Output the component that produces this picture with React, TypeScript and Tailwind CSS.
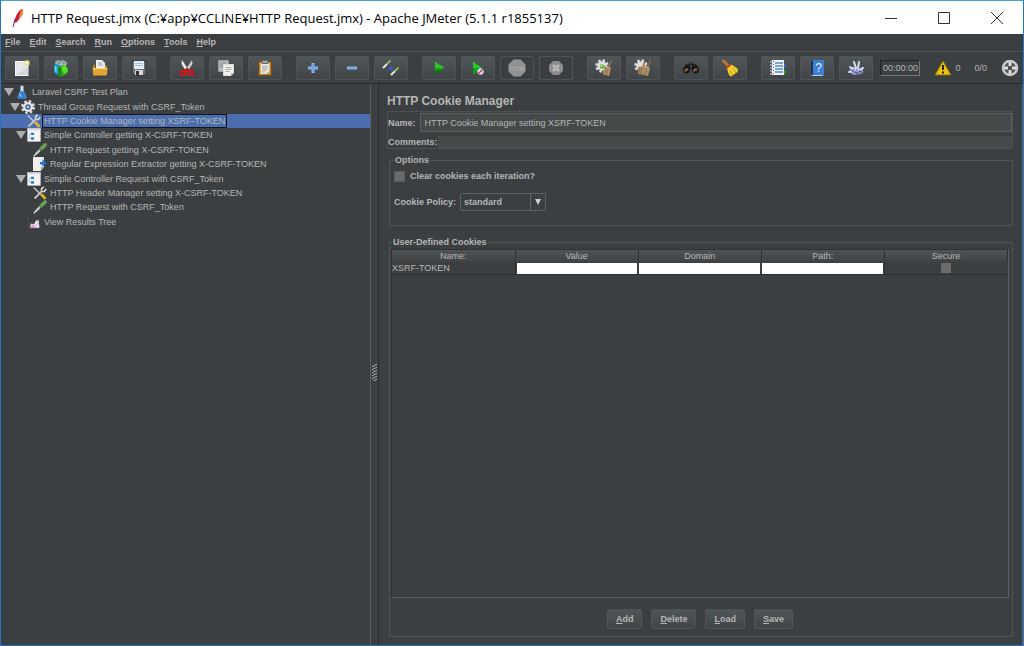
import React, { useState } from 'react';

type IconFC = React.FC;

const Svg: React.FC<{ size?: string; children: React.ReactNode }> = ({ size = 'size-[18px]', children }) => (
  <svg viewBox="0 0 18 18" className={`${size} shrink-0`} aria-hidden="true">
    {children}
  </svg>
);

/* ---------- toolbar icons ---------- */

const NewIcon: IconFC = () => (
  <Svg>
    <rect x="2.5" y="2.5" width="12.5" height="14" fill="#e6e6e6" stroke="#f4f4f4" />
    <path d="M3 16h12V8z" fill="#d8d8d8" />
    <circle cx="14" cy="4" r="3" fill="#e8e27a" opacity=".7" />
    <circle cx="14" cy="4" r="1.2" fill="#fffbc0" />
  </Svg>
);

const TemplatesIcon: IconFC = () => (
  <Svg>
    <path d="M3 3l3-2 2 1 2-1 5 2-1 4H4z" fill="#a9b7bd" />
    <path d="M5 2l2 3 2-3M10 2l2 3 2-2" stroke="#6c8791" fill="none" />
    <path d="M2 6l3-1 3 1v10l-4-1-2-2z" fill="#1c9ccc" />
    <path d="M3 7l1.5 1v6L3 12z" fill="#7cd8f2" />
    <path d="M6 8l6-2 4 3v4l-3 3-6 2z" fill="#2aa51a" />
    <path d="M9 8l4-1.500 2.500 3V13L12 15z" fill="#5be02b" />
    <path d="M6 8l3 1v8l-2 1z" fill="#14820f" />
  </Svg>
);

const OpenIcon: IconFC = () => (
  <Svg>
    <path d="M5 1h6l3 3v6H5z" fill="#eeeeee" />
    <path d="M7 4h4M7 6h5" stroke="#9a9a9a" />
    <path d="M2 7l2-2v5h10V6l2 1v8l-1 1H3l-1-1z" fill="#c78a1c" />
    <path d="M1.500 10l3-1h12l-.5 6-1 1.500H2.500z" fill="#e3a532" />
    <path d="M2 10l3-.5h11" stroke="#f9d57c" fill="none" />
  </Svg>
);

const SaveIcon: IconFC = () => (
  <Svg>
    <path d="M2 2h14v14H4l-2-2z" fill="#6a6e71" stroke="#303437" />
    <rect x="4" y="2" width="10" height="8" fill="#e6eef5" />
    <path d="M5 4.500h8M5 6.500h8" stroke="#9dbdd8" />
    <rect x="5" y="11" width="8" height="5" fill="#d5d5d5" />
    <rect x="6" y="12" width="3" height="4" fill="#333638" />
  </Svg>
);

const CutIcon: IconFC = () => (
  <Svg>
    <path d="M4 1l6 9-2 2-4.500-7z" fill="#f0f0f0" />
    <path d="M14 1L8 10l2 2 4.500-7z" fill="#c9c9c9" />
    <ellipse cx="5" cy="14" rx="2.500" ry="2" fill="none" stroke="#d3141a" strokeWidth="2" />
    <ellipse cx="13" cy="14" rx="2.500" ry="2" fill="none" stroke="#d3141a" strokeWidth="2" />
    <path d="M6.500 12.500L9 10l2.500 2.500" stroke="#d3141a" strokeWidth="2.500" fill="none" />
  </Svg>
);

const CopyIcon: IconFC = () => (
  <Svg>
    <path d="M1.500 1.500h10v11h-10z" fill="#b9bbbb" stroke="#979999" />
    <path d="M3 4h6M3 6h4M3 8h3" stroke="#8b8d8d" />
    <path d="M6.500 5.500h10V14L14 16.500H6.500z" fill="#f1f1ee" stroke="#deded8" />
    <path d="M8.500 8.500h6M8.500 10.500h6M8.500 12.500h4" stroke="#a9a9a4" />
    <path d="M16.500 14H14v2.500z" fill="#bababa" />
  </Svg>
);

const PasteIcon: IconFC = () => (
  <Svg>
    <rect x="2.500" y="2.500" width="13" height="14" rx="1" fill="#b87820" stroke="#754b10" />
    <path d="M4.500 4h9v11h-9z" fill="#efeee9" />
    <path d="M6 1.500h6v3H6z" fill="#a6a6a6" stroke="#666" />
    <path d="M6 7h6M6 9h6M6 11h5M6 13h3" stroke="#a09f99" />
    <path d="M13.500 11.500L10 15h3.500z" fill="#a9a99f" />
  </Svg>
);

const PlusIcon: IconFC = () => (
  <Svg>
    <path d="M9 4v10M4 9h10" stroke="#8db9ee" strokeWidth="3" />
    <path d="M9 5v8M5 9h8" stroke="#5e98df" />
  </Svg>
);

const MinusIcon: IconFC = () => (
  <Svg>
    <path d="M4 9h10" stroke="#8db9ee" strokeWidth="3" />
    <path d="M5 9h8" stroke="#5e98df" />
  </Svg>
);

const ToggleIcon: IconFC = () => (
  <Svg>
    <path d="M1 9l4-4" stroke="#e9e9e9" strokeWidth="2" />
    <path d="M5 5l3.500-3.500" stroke="#86b65d" strokeWidth="2" />
    <path d="M9 16l4-4" stroke="#e9e9e9" strokeWidth="2" />
    <path d="M12.500 12.500L16.500 8.500" stroke="#86b65d" strokeWidth="2" />
    <path d="M5 6l3 3" stroke="#2c55b4" strokeDasharray="1 1" />
    <path d="M10.500 6.500v5l-4.500-1z" fill="#2267e0" />
  </Svg>
);

const StartIcon: IconFC = () => (
  <Svg>
    <path d="M5 2.500L14.500 9 5 15.500z" fill="#12a112" />
    <path d="M5 2.500L14.500 9H5z" fill="#2fc42b" />
    <path d="M5 12l6-1-6 4.500z" fill="#087008" />
  </Svg>
);

const StartNoPauseIcon: IconFC = () => (
  <Svg>
    <path d="M4 2.500L13 9l-9 6.500z" fill="#12a112" />
    <path d="M4 2.500L13 9H4z" fill="#2fc42b" />
    <circle cx="11.500" cy="12.500" r="3" fill="#e6eef7" stroke="#8db2dd" />
    <path d="M9.500 14.500l4-4" stroke="#de2525" strokeWidth="1.500" />
  </Svg>
);

const StopIcon: IconFC = () => (
  <Svg>
    <path d="M5.500.5h7l5 5v7l-5 5h-7l-5-5v-7z" fill="#929292" />
    <text x="9" y="11.500" textAnchor="middle" fontSize="6" fontWeight="bold" fontFamily="Liberation Sans, sans-serif" fill="#a8a8a8">STOP</text>
  </Svg>
);

const ShutdownIcon: IconFC = () => (
  <Svg>
    <path d="M6 2h6l4 4v6l-4 4H6l-4-4V6z" fill="#8b8b8b" />
    <path d="M6 6l6 6M12 6l-6 6" stroke="#b5b5b5" strokeWidth="3" />
  </Svg>
);

const Broom: React.FC = () => (
  <>
    <path d="M16.500 1.500L14 8" stroke="#8a6f52" strokeWidth="1.500" />
    <path d="M9 7l7 1.500-2 8.500-6-1.500z" fill="#b3956c" />
    <path d="M11 9l-1 7M13 9.500L12 16" stroke="#8e744f" />
  </>
);

/* toothed wheel shared by both clear buttons */
const Wheel: React.FC = () => (
  <>
    <circle cx="7" cy="7" r="5.500" fill="none" stroke="#dedede" strokeWidth="2.500" strokeDasharray="2.400 1.900" />
    <circle cx="7" cy="7" r="4.800" fill="#dedede" />
  </>
);

const ClearIcon: IconFC = () => (
  <Svg>
    <Wheel />
    <circle cx="7" cy="7.500" r="2.200" fill="#5fae2e" />
    <circle cx="6.500" cy="7" r="1" fill="#c9ecac" />
    <Broom />
  </Svg>
);

const ClearAllIcon: IconFC = () => (
  <Svg>
    <Wheel />
    <path d="M11 2L9 8" stroke="#8a6f52" strokeWidth="1.500" />
    <path d="M4 8l7-1-1 9-6-1z" fill="#a58861" />
    <path d="M6 9l-1 6M8 9l-1 6" stroke="#856c4a" />
    <Broom />
  </Svg>
);

const SearchIcon: IconFC = () => (
  <Svg>
    <path d="M4 5l3-2 2 2 2-2 3 2 3 5-3 3h-3L9 9l-2 4H4l-3-3z" fill="#1e1f20" />
    <circle cx="4.500" cy="11" r="3" fill="#26282a" stroke="#0e0e0e" />
    <circle cx="13.500" cy="11" r="3" fill="#26282a" stroke="#0e0e0e" />
    <path d="M3 12.500a2 2 0 013-2M12 12.500a2 2 0 013-2" stroke="#b4703b" fill="none" strokeWidth="1.500" />
    <path d="M5 5l2-1M11 4l2 1M8 7h2" stroke="#6f7274" />
  </Svg>
);

const SearchResetIcon: IconFC = () => (
  <Svg>
    <path d="M2.500 2l5 5" stroke="#b07a32" strokeWidth="3" strokeLinecap="round" />
    <path d="M6 9.500l4.500-4L17 10l-.5 3L10 17.500 8 16z" fill="#eed02a" />
    <path d="M9 11l2 5M12 9l3 5" stroke="#c49c12" />
    <path d="M5 9.500l5-4.500" stroke="#c93d28" strokeWidth="2" />
  </Svg>
);

const FunctionHelperIcon: IconFC = () => (
  <Svg>
    <rect x="3" y="1" width="12" height="15" fill="#f3f3f3" />
    <path d="M6 4h8M6 7h8M6 10h8M6 13h8" stroke="#4a89d3" strokeWidth="1.500" />
    <path d="M1 3h3M1 6h3M1 9h3M1 12h3M1 15h3" stroke="#e6e6e6" />
    <path d="M4.500 2v13" stroke="#555" strokeDasharray="1 2" />
    <path d="M15 5h1.500v4H15z" fill="#2d73cf" />
    <path d="M15 11h1.500v4H15z" fill="#28a32d" />
  </Svg>
);

const HelpIcon: IconFC = () => (
  <Svg>
    <path d="M3 2h2v14H3z" fill="#20344e" />
    <path d="M5 1h11v15H5z" fill="#3c80d6" />
    <path d="M3 16h12v1H4z" fill="#bfcbd9" />
    <text x="10.500" y="13" textAnchor="middle" fontSize="12" fontFamily="Liberation Sans, sans-serif" fill="#e8f2ff">?</text>
  </Svg>
);

const DebugIcon: IconFC = () => (
  <Svg>
    <path d="M3 9c2-2 5-1 7 0l6 2c1 2-1 4-3 4l-5 1c-3 0-6-3-5-7z" fill="#8fa0d2" />
    <path d="M7 3l2 6M12 3l-1 6M3 8l5 3M16 9l-4 2M2 13l5-1" stroke="#d6dff5" strokeWidth="2" strokeLinecap="round" />
    <path d="M4 11l3 2M8 13l3 2M12 12l3 1" stroke="#4359a8" strokeWidth="1.500" />
    <path d="M6 10l3 3M11 14l3-1" stroke="#c8516e" />
  </Svg>
);

const WarningIcon: IconFC = () => (
  <Svg>
    <path d="M9 2l8 14H1z" fill="#e9c40e" stroke="#8d7208" strokeLinejoin="round" />
    <path d="M9 6v5M9 12.500v2" stroke="#2b2300" strokeWidth="2" />
  </Svg>
);

const EngineIcon: IconFC = () => (
  <Svg>
    <circle cx="9" cy="9" r="7" fill="#4f5253" stroke="#c9c9c9" strokeWidth="2.500" />
    <path d="M9 3v4M9 11v4M3 9h4M11 9h4" stroke="#dcdcdc" strokeWidth="3" />
  </Svg>
);

/* ---------- tree icons ---------- */

const FlaskIcon: IconFC = () => (
  <Svg size="size-[14px]">
    <path d="M7 1h4v6l4 9-1 1H4l-1-1 4-9z" fill="#c9dcea" />
    <path d="M7 8h4l4 8-1 1.500H4L3 16z" fill="#2f7fd6" />
    <path d="M6 11l2 4" stroke="#9ed0ff" strokeWidth="1.500" />
  </Svg>
);

const GearIcon: IconFC = () => (
  <Svg size="size-[14px]">
    <circle cx="9" cy="9" r="7.500" fill="none" stroke="#dcdcdc" strokeWidth="3" strokeDasharray="3.300 2.590" />
    <circle cx="9" cy="9" r="5" fill="#4a6496" stroke="#e6e6e6" strokeWidth="3" />
    <circle cx="9" cy="9" r="1.500" fill="#c9d3e6" />
  </Svg>
);

const ToolsIcon: IconFC = () => (
  <Svg size="size-[14px]">
    <path d="M1 2l9 9" stroke="#c8c8c8" strokeWidth="2" />
    <path d="M10.500 10.500l5.500 6" stroke="#e8b61a" strokeWidth="3.500" />
    <path d="M2 16L12 6" stroke="#c4c4c4" strokeWidth="2.500" />
    <path d="M11 6V3.500L14 1M12 7h2.500L17 4" stroke="#dedede" strokeWidth="2" fill="none" />
  </Svg>
);

const ControllerIcon: IconFC = () => (
  <Svg size="size-[14px]">
    <path d="M.5.5h17v17H.5z" fill="#f4f4f4" />
    <path d="M.5.5h17v2.500H.5z" fill="#d6dadd" />
    <path d="M5 6h4v3H5zM5 12h4v3H5z" fill="#2c7ad0" />
    <path d="M3.500 7v7" stroke="#9dbde0" />
  </Svg>
);

const SamplerIcon: IconFC = () => (
  <Svg size="size-[14px]">
    <path d="M1 17l3-3" stroke="#e7e7e7" strokeWidth="1.500" />
    <path d="M3.500 14.500L10 8" stroke="#c6caca" strokeWidth="3" />
    <path d="M10.500 7.500l5-5" stroke="#6aa556" strokeWidth="4.500" strokeLinecap="round" />
    <path d="M8.500 7.500l2.500 2.500" stroke="#3c6e30" strokeWidth="1.500" />
  </Svg>
);

const ExtractorIcon: IconFC = () => (
  <Svg size="size-[14px]">
    <path d="M0 0h14v13l-4 5H0z" fill="#f0f0ec" />
    <path d="M14 13h-4v5z" fill="#a5a5a0" />
    <path d="M9 6.500h3V3l5.500 5-5.500 5V9.500H9z" fill="#2376d4" />
  </Svg>
);

const ResultsIcon: IconFC = () => (
  <Svg size="size-[14px]">
    <path d="M2 1v16h15" stroke="#5d5168" fill="none" />
    <path d="M4 16l1-5 4 1 3-6 2 2 1-3 1 11z" fill="#e6dcf4" />
    <path d="M4 16l3-4 3 2 5-5v7z" fill="#e3a2cf" />
    <path d="M10 16l5-5v5z" fill="#eef4fb" />
  </Svg>
);

/* ---------- data ---------- */

const menus = ['File', 'Edit', 'Search', 'Run', 'Options', 'Tools', 'Help'];

const toolGroups: { label: string; icon: IconFC; disabled?: boolean }[][] = [
  [
    { label: 'New', icon: NewIcon },
    { label: 'Templates', icon: TemplatesIcon },
    { label: 'Open', icon: OpenIcon },
    { label: 'Save', icon: SaveIcon },
  ],
  [
    { label: 'Cut', icon: CutIcon },
    { label: 'Copy', icon: CopyIcon },
    { label: 'Paste', icon: PasteIcon },
  ],
  [
    { label: 'Expand All', icon: PlusIcon },
    { label: 'Collapse All', icon: MinusIcon },
    { label: 'Toggle', icon: ToggleIcon },
  ],
  [
    { label: 'Start', icon: StartIcon },
    { label: 'Start no pauses', icon: StartNoPauseIcon },
    { label: 'Stop', icon: StopIcon, disabled: true },
    { label: 'Shutdown', icon: ShutdownIcon, disabled: true },
  ],
  [
    { label: 'Clear', icon: ClearIcon },
    { label: 'Clear All', icon: ClearAllIcon },
  ],
  [
    { label: 'Find', icon: SearchIcon },
    { label: 'Reset Search', icon: SearchResetIcon },
  ],
  [
    { label: 'Function Helper', icon: FunctionHelperIcon },
    { label: 'Help', icon: HelpIcon },
    { label: 'Debug', icon: DebugIcon },
  ],
];

const indents = ['pl-[3px]', 'pl-[9px]', 'pl-[15px]', 'pl-[21px]'];

const treeRows: { label: string; level: number; icon: IconFC; open?: boolean }[] = [
  { label: 'Laravel CSRF Test Plan', level: 0, icon: FlaskIcon, open: true },
  { label: 'Thread Group Request with CSRF_Token', level: 1, icon: GearIcon, open: true },
  { label: 'HTTP Cookie Manager setting XSRF-TOKEN', level: 2, icon: ToolsIcon },
  { label: 'Simple Controller getting X-CSRF-TOKEN', level: 2, icon: ControllerIcon, open: true },
  { label: 'HTTP Request getting X-CSRF-TOKEN', level: 3, icon: SamplerIcon },
  { label: 'Regular Expression Extractor getting X-CSRF-TOKEN', level: 3, icon: ExtractorIcon },
  { label: 'Simple Controller Request with CSRF_Token', level: 2, icon: ControllerIcon, open: true },
  { label: 'HTTP Header Manager setting X-CSRF-TOKEN', level: 3, icon: ToolsIcon },
  { label: 'HTTP Request with CSRF_Token', level: 3, icon: SamplerIcon },
  { label: 'View Results Tree', level: 2, icon: ResultsIcon },
];

/* ---------- parts ---------- */

const Mnemonic: React.FC<{ text: string }> = ({ text }) => (
  <>
    <span className="underline">{text[0]}</span>
    {text.slice(1)}
  </>
);

const TitleBar: React.FC = () => (
  <header className="flex h-[33px] shrink-0 items-center bg-white pl-2 text-black">
    <svg viewBox="0 0 16 20" className="h-5 w-4 shrink-0" aria-hidden="true">
      <path d="M13 1c1.500 1 1.500 4-.5 7L8 14l-3 1 1-4c1-4 4-9 7-10z" fill="#d22128" />
      <path d="M13 1c1.500 1 1.500 4-.5 7l-3 3L11 5z" fill="#f28a26" />
      <path d="M6 11l-2 8M6 12l5-7" stroke="#7a2a7e" fill="none" />
    </svg>
    <h1 className="ml-[6px] grow whitespace-nowrap font-['Open_Sans',sans-serif] text-[13px]">
      HTTP Request.jmx (C:¥app¥CCLINE¥HTTP Request.jmx) - Apache JMeter (5.1.1 r1855137)
    </h1>
    <div className="flex h-full text-[#333]">
      <button aria-label="Minimize" className="grid w-[53px] place-items-center">
        <svg viewBox="0 0 12 12" className="size-3"><path d="M0 6.500h12" stroke="currentColor" /></svg>
      </button>
      <button aria-label="Maximize" className="grid w-[53px] place-items-center">
        <svg viewBox="0 0 12 12" className="size-3"><path d="M.5.5h11v11H.5z" stroke="currentColor" fill="none" /></svg>
      </button>
      <button aria-label="Close" className="grid w-[53px] place-items-center">
        <svg viewBox="0 0 12 12" className="size-3"><path d="M0 0l12 12M12 0L0 12" stroke="currentColor" /></svg>
      </button>
    </div>
  </header>
);

const Toolbar: React.FC = () => (
  <div className="flex h-8 shrink-0 items-center border-t border-[#4d5052] pr-1 pl-1">
    <div className="flex grow justify-between">
      {toolGroups.map((group, i) => (
        <div key={i} className="flex gap-[5px]">
          {group.map(({ label, icon: Icon, disabled }) => (
            <button
              key={label}
              aria-label={label}
              disabled={disabled}
              className="grid h-6 w-[34px] place-items-center rounded-[2px] border border-[#505456] bg-linear-to-b from-[#505557] to-[#414547] disabled:bg-none"
            >
              <Icon />
            </button>
          ))}
        </div>
      ))}
    </div>
    <output className="ml-[7px] h-4 w-10 border border-[#222425] border-r-[#777] border-b-[#777] text-center leading-[14px]">00:00:00</output>
    <button aria-label="Errors" className="ml-[14px] flex items-center gap-[3px]">
      <WarningIcon />0
    </button>
    <span className="mx-[14px]">0/0</span>
    <EngineIcon />
  </div>
);

const Tree: React.FC<{ selected: number; onSelect: (i: number) => void }> = ({ selected, onSelect }) => (
  <aside className="shrink-0 basis-[370px] border-r border-[#5c5f61] pt-px">
    <div role="tree" className="flex h-36 flex-col">
      {treeRows.map(({ label, level, icon: Icon, open }, i) => (
        <div
          key={i}
          role="treeitem"
          aria-selected={i === selected}
          onClick={() => onSelect(i)}
          className={`flex min-h-0 flex-1 items-center ${indents[level]} ${i === selected ? 'bg-[#4b6eaf]' : ''}`}
        >
          <svg viewBox="0 0 11 10" className="h-[10px] w-[11px] shrink-0" aria-hidden="true">
            {open && <path d="M0 1h10L5 9z" fill="#adadad" />}
          </svg>
          <Icon />
          <span className={`ml-px border px-px leading-3 whitespace-nowrap ${i === selected ? 'border-[#12151c]' : 'border-transparent'}`}>
            {label}
          </span>
        </div>
      ))}
    </div>
  </aside>
);

const CookieTable: React.FC = () => (
  <div className="grow border border-[#2f3233] border-r-[#5c5f61] border-b-[#5c5f61]">
    <table className="w-full table-fixed border-collapse">
      <thead>
        <tr className="h-3 bg-linear-to-b from-[#505355] to-[#404345]">
          {['Name:', 'Value', 'Domain', 'Path:', 'Secure'].map((h) => (
            <th key={h} className="border-r border-[#2f3233] p-0 leading-3 font-normal">{h}</th>
          ))}
        </tr>
      </thead>
      <tbody>
        <tr className="h-3 border-b border-[#2f3233]">
          <td className="border-r border-[#2f3233] p-0 leading-3">XSRF-TOKEN</td>
          {['Value', 'Domain', 'Path'].map((name) => (
            <td key={name} className="p-0 px-px">
              <input aria-label={name} className="block h-[11px] w-full bg-white px-px text-black outline-none" />
            </td>
          ))}
          <td className="border-l border-[#2f3233] p-0">
            <input type="checkbox" aria-label="Secure" className="mx-auto block size-[10px] appearance-none bg-[#6b6b6b] checked:bg-[#4b6eaf]" />
          </td>
        </tr>
      </tbody>
    </table>
  </div>
);

const CookieManager: React.FC<{ name: string; onNameChange: (v: string) => void }> = ({ name, onNameChange }) => (
  <main className="flex min-w-0 flex-1 flex-col border-r border-l border-r-[#5c5f61] border-l-[#2b2d2e] pr-[9px] pb-2 pl-2">
    <h2 className="mt-[7px] text-[12px] leading-5 font-bold">HTTP Cookie Manager</h2>

    <div className="flex flex-col gap-1 border border-[#4d5052] pt-px font-bold">
      <div className="flex items-center gap-1">
        <label htmlFor="name">Name:</label>
        <input
          id="name"
          value={name}
          onChange={(e) => onNameChange(e.target.value)}
          className="h-[19px] grow border border-[#5c5f61] bg-[#45494a] px-1 font-normal outline-none"
        />
      </div>
      <div className="flex items-center">
        <label htmlFor="comments">Comments:</label>
        <input id="comments" className="h-3 grow bg-[#45494a] font-normal outline-none" />
      </div>
    </div>

    <fieldset className="mt-[5px] ml-[2px] h-[72px] border border-[#515456] pl-1 font-bold">
      <legend className="px-px leading-3">Options</legend>
      <label className="mt-1 flex items-center gap-[5px]">
        <input type="checkbox" className="size-[11px] appearance-none border border-[#5a5a5a] bg-[#6b6b6b] checked:bg-[#4b6eaf]" />
        Clear cookies each iteration?
      </label>
      <div className="mt-[11px] flex items-center gap-1">
        <label htmlFor="policy">Cookie Policy:</label>
        <div className="relative">
          <select id="policy" defaultValue="standard" className="h-[18px] w-[86px] appearance-none rounded-[2px] border border-[#5f6365] bg-[#3c3f41] px-[3px] font-bold outline-none">
            <option>standard</option>
            <option>standard-strict</option>
            <option>ignoreCookies</option>
            <option>netscape</option>
            <option>default</option>
          </select>
          <span className="pointer-events-none absolute inset-y-px right-px grid w-[15px] place-items-center border-l border-[#5f6365]">
            <svg viewBox="0 0 6 6" className="size-[6px]"><path d="M0 0h6L3 6z" fill="#d0d0d0" /></svg>
          </span>
        </div>
      </div>
    </fieldset>

    <fieldset className="mt-[10px] ml-[2px] flex grow flex-col border border-[#515456] pr-[3px] pl-px font-normal">
      <legend className="ml-px px-px leading-3 font-bold">User-Defined Cookies</legend>
      <div className="flex h-full flex-col pt-px">
        <CookieTable />
        <div className="flex justify-center gap-[9px] pt-[11px] pb-[7px]">
          {['Add', 'Delete', 'Load', 'Save'].map((b) => (
            <button key={b} className="h-5 rounded-[2px] border border-[#505456] bg-linear-to-b from-[#505557] to-[#414547] px-2 font-bold">
              <Mnemonic text={b} />
            </button>
          ))}
        </div>
      </div>
    </fieldset>
  </main>
);

export default function App() {
  const [selected, setSelected] = useState(2);
  const [name, setName] = useState('HTTP Cookie Manager setting XSRF-TOKEN');

  return (
    <div className="flex min-h-screen flex-col border border-[#2675bf] border-t-[#4a9be0] bg-[#3c3f41] font-['Liberation_Sans',Arial,sans-serif] text-[9px] leading-3 text-[#b6b6b6]">
      <TitleBar />
      <nav className="flex h-[17px] shrink-0 items-center gap-[9px] pb-px pl-1 font-bold">
        {menus.map((m) => (
          <button key={m}>
            <Mnemonic text={m} />
          </button>
        ))}
      </nav>
      <Toolbar />
      <div className="flex grow border-t border-[#2b2d2e]">
        <Tree selected={selected} onSelect={setSelected} />
        <div className="flex w-[7px] shrink-0 cursor-col-resize items-center justify-center pt-4">
          <svg viewBox="0 0 5 17" className="h-[17px] w-[5px]" aria-hidden="true">
            <path d="M0 3l5-3M0 6l5-3M0 9l5-3M0 12l5-3M0 15l5-3M0 18l5-3" stroke="#b5b5b5" />
          </svg>
        </div>
        <CookieManager name={name} onNameChange={setName} />
      </div>
    </div>
  );
}
